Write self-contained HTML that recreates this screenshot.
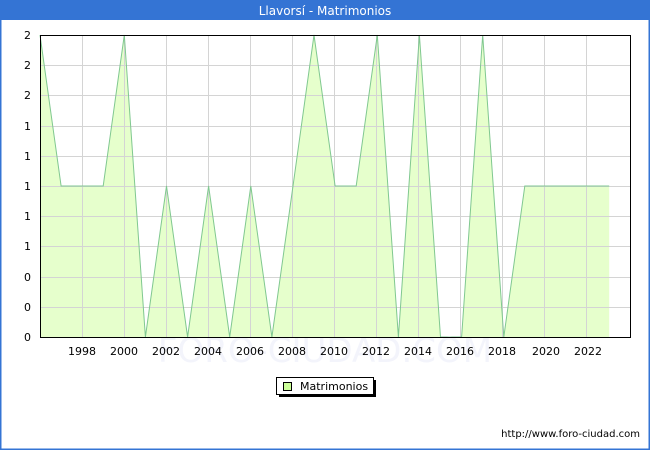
<!DOCTYPE html>
<html><head><meta charset="utf-8"><style>
body{margin:0;width:650px;height:450px;overflow:hidden;background:#fff;font-family:"DejaVu Sans","Liberation Sans",sans-serif;}
</style></head><body>
<svg width="650" height="450" xmlns="http://www.w3.org/2000/svg" font-family="DejaVu Sans, Liberation Sans, sans-serif">
<rect x="0.5" y="0.5" width="649" height="449" fill="#fff" stroke="#3474d4" stroke-width="2"/>
<rect x="0" y="0" width="650" height="20" fill="#3474d4"/>
<text x="325" y="15" fill="#fff" font-size="12" text-anchor="middle">Llavorsí - Matrimonios</text>
<polygon fill="#e6ffcc" points="40,337 40,35 61.1,186 82.2,186 103.2,186 124.3,35 145.4,337 166.5,186 187.6,337 208.6,186 229.7,337 250.8,186 271.9,337 293,186 314,35 335.1,186 356.2,186 377.3,35 398.4,337 419.4,35 440.5,337 461.6,337 482.7,35 503.8,337 524.8,186 545.9,186 567,186 588.1,186 609.2,186 609.2,337"/>
<g stroke="#d4d4d4" stroke-width="1">
<line x1="40" y1="65.5" x2="630" y2="65.5"/><line x1="40" y1="95.5" x2="630" y2="95.5"/><line x1="40" y1="126.5" x2="630" y2="126.5"/><line x1="40" y1="156.5" x2="630" y2="156.5"/><line x1="40" y1="186.5" x2="630" y2="186.5"/><line x1="40" y1="216.5" x2="630" y2="216.5"/><line x1="40" y1="246.5" x2="630" y2="246.5"/><line x1="40" y1="277.5" x2="630" y2="277.5"/><line x1="40" y1="307.5" x2="630" y2="307.5"/>
<line x1="82.5" y1="35" x2="82.5" y2="337"/><line x1="124.5" y1="35" x2="124.5" y2="337"/><line x1="166.5" y1="35" x2="166.5" y2="337"/><line x1="208.5" y1="35" x2="208.5" y2="337"/><line x1="250.5" y1="35" x2="250.5" y2="337"/><line x1="292.5" y1="35" x2="292.5" y2="337"/><line x1="334.5" y1="35" x2="334.5" y2="337"/><line x1="376.5" y1="35" x2="376.5" y2="337"/><line x1="418.5" y1="35" x2="418.5" y2="337"/><line x1="460.5" y1="35" x2="460.5" y2="337"/><line x1="502.5" y1="35" x2="502.5" y2="337"/><line x1="544.5" y1="35" x2="544.5" y2="337"/><line x1="586.5" y1="35" x2="586.5" y2="337"/>
</g>
<polyline fill="none" stroke="#80c890" stroke-width="1" points="40,35 61.1,186 82.2,186 103.2,186 124.3,35 145.4,337 166.5,186 187.6,337 208.6,186 229.7,337 250.8,186 271.9,337 293,186 314,35 335.1,186 356.2,186 377.3,35 398.4,337 419.4,35 440.5,337 461.6,337 482.7,35 503.8,337 524.8,186 545.9,186 567,186 588.1,186 609.2,186"/>
<text x="325" y="362" fill="#eef0fa" font-size="34" text-anchor="middle" opacity="0.7">FORO-CIUDAD.COM</text>
<rect x="40.5" y="35.5" width="590" height="302" fill="none" stroke="#000" stroke-width="1"/>
<g font-size="11" fill="#000" text-anchor="end">
<text x="31" y="39">2</text><text x="31" y="69">2</text><text x="31" y="99">2</text><text x="31" y="130">1</text><text x="31" y="160">1</text><text x="31" y="190">1</text><text x="31" y="220">1</text><text x="31" y="250">1</text><text x="31" y="281">0</text><text x="31" y="311">0</text><text x="31" y="341">0</text>
</g>
<g font-size="11" fill="#000" text-anchor="middle">
<text x="82" y="355">1998</text><text x="124" y="355">2000</text><text x="166" y="355">2002</text><text x="208" y="355">2004</text><text x="250" y="355">2006</text><text x="292" y="355">2008</text><text x="334" y="355">2010</text><text x="376" y="355">2012</text><text x="418" y="355">2014</text><text x="460" y="355">2016</text><text x="502" y="355">2018</text><text x="546" y="355">2020</text><text x="588" y="355">2022</text>
</g>
<rect x="279" y="380" width="97" height="17" fill="#000"/>
<rect x="276.5" y="377.5" width="97" height="17" fill="#fff" stroke="#000"/>
<rect x="283.5" y="382.5" width="8" height="8" fill="#ccff99" stroke="#000"/>
<text x="300" y="390" font-size="11">Matrimonios</text>
<text x="640" y="437" font-size="10" text-anchor="end">http://www.foro-ciudad.com</text>
</svg>
</body></html>
